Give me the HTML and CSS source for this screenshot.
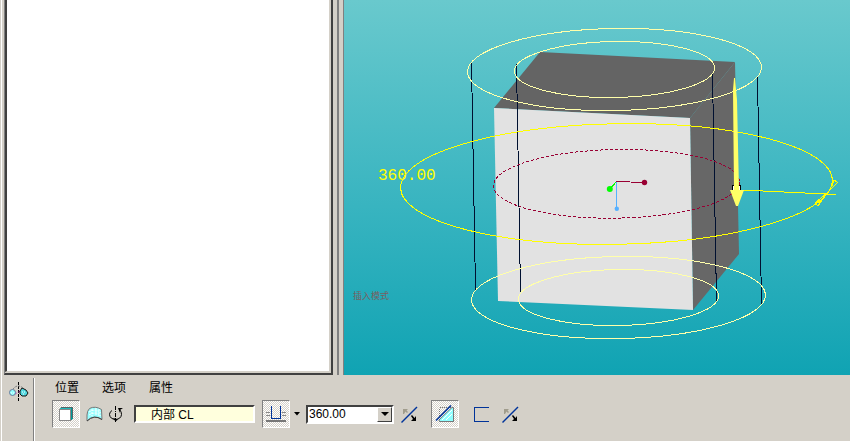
FILE: index.html
```
<!DOCTYPE html>
<html lang="zh-CN">
<head>
  <meta charset="UTF-8">
  <meta name="viewport" content="width=device-width, initial-scale=1.0">
  <title>旋转</title>
  <link rel="stylesheet" href="styles.css">
</head>
<body>
  <div class="app">
    <main class="workspace">
      <aside class="tree-panel">
        <div class="tree-content"></div>
      </aside>
      <div class="splitter"></div>

      <section class="viewport">
        <svg class="scene" viewBox="344 0 506 375">
          <!-- Solid block -->
          <polygon fill="#646464" points="540,52 735,62 690,118 494,108"/>
          <polygon fill="#676767" points="690,118 735,62 739,254 693,310"/>
          <polygon fill="#e2e2e2" points="494,108 690,118 693,310 498,301"/>

          <!-- Revolve preview -->
          <g class="wire edge">
            <path d="M471.5 63L475.5 290M516.5 64L520.5 292M712.5 74L716.5 301M757.5 77L761.5 304"/>
          </g>
          <g class="wire ring">
            <ellipse cx="614.5" cy="69.5" rx="147" ry="41" transform="rotate(-1 614.5 69.5)"/>
            <ellipse cx="614.5" cy="69.5" rx="100" ry="28" transform="rotate(-1 614.5 69.5)"/>
            <ellipse cx="618.5" cy="297.5" rx="147" ry="41" transform="rotate(-1 618.5 297.5)"/>
            <ellipse cx="618.5" cy="297.5" rx="100" ry="28" transform="rotate(-1 618.5 297.5)"/>
          </g>
          <ellipse class="wire path" cx="616.5" cy="183.8" rx="123" ry="34.300" transform="rotate(-1 616.5 183.8)"/>
          <ellipse class="wire angle" cx="616.5" cy="184" rx="216" ry="60.300" transform="rotate(-1 616.5 184)"/>
          <path class="wire angle" d="M742 190L836 194.5M834 180L837.5 182.5L827 193L818 206L815 203L827 193M815 203L820 202M834 180L832 186"/>

          <!-- Direction handle -->
          <rect x="732.5" y="185.5" width="8" height="6" fill="#fff" stroke="#000"/>
          <path fill="#ffff66" d="M734 78H735L737 100L739 190H744L738 206H736L730 190H734L733 90Z"/>

          <!-- Datum axes -->
          <g class="wire">
            <path stroke="#00ff00" d="M616.5 181.5L610 189"/>
            <path stroke="#55b0ff" d="M616.5 181.5V208"/>
            <path stroke="#990033" d="M616.5 181.5L644 182.5"/>
          </g>
          <circle cx="609.8" cy="189" r="3" fill="#00ff00"/>
          <circle cx="616.8" cy="208.8" r="2.2" fill="#55b0ff"/>
          <circle cx="644.5" cy="182.5" r="2.7" fill="#990033"/>

          <text class="angle-label" x="378" y="180">360.00</text>
          <text class="mode-label" x="353" y="299">插入模式</text>
        </svg>
      </section>
    </main>

    <footer class="dashboard">
      <div class="feature-cell">
        <svg width="20" height="20" viewBox="0 0 20 20">
          <path d="M9.5 0V20" stroke="#000" stroke-dasharray="3 1" fill="none" shape-rendering="crispEdges"/>
          <path d="M4 7Q9 1 15 7" stroke="#777" stroke-dasharray="2 1" fill="none"/>
          <path d="M6 12L13 8" stroke="#c030c0" stroke-dasharray="2 2"/>
          <path d="M11 9L13 6L17 8L19 11L17 14H13L11 12Z" fill="#50d8e0" stroke="#111"/>
          <circle cx="3.5" cy="10.500" r="3" fill="#90ffff" stroke="#667799"/>
          <path d="M13 10H17M14 12H16M2 11H5" stroke="#fff" stroke-dasharray="1 1"/>
        </svg>
      </div>

      <div class="dashboard-body">
        <nav class="tabs">
          <button class="tab">位置</button>
          <button class="tab">选项</button>
          <button class="tab">属性</button>
        </nav>

        <div class="toolbar">
          <button class="tool pressed" aria-label="实体">
            <svg width="16" height="16" viewBox="0 0 16 16" shape-rendering="crispEdges">
              <path d="M12 3L15 1V12L12 15Z" fill="#009999"/>
              <path d="M1 3L4 1H15L12 3Z" fill="#20b8b8"/>
              <path d="M1.500 3.500H12.500V14.500H1.500Z" fill="#fff" stroke="#888"/>
              <path d="M3 1.500H14.500V12" fill="none" stroke="#566"/>
            </svg>
          </button>
          <button class="tool flat surface" aria-label="曲面">
            <svg width="17" height="16" viewBox="0 0 17 16">
              <path d="M3.500 2.500Q9 -0.500 15.500 3.500L16 13.500Q8 8 1 15V9Q1 5 3.500 2.500Z" fill="#98ffff" stroke="#777"/>
              <path d="M3 6Q9 2 15 7M3 9Q9 5 15 10M6 3V10M10 2V9M13 3V10" fill="none" stroke="#fff" stroke-dasharray="2 1"/>
              <path d="M1 15Q8 8 16 13.500" fill="none" stroke="#444"/>
            </svg>
          </button>
          <button class="tool flat revolve" aria-label="旋转轴">
            <svg width="16" height="16" viewBox="0 0 16 16">
              <path d="M6.500 0V16" stroke="#000" stroke-dasharray="4 1 1 1" shape-rendering="crispEdges"/>
              <path d="M3 4.500Q0.500 6 0.500 8.500Q1 13 6.500 13.500Q12 13 12.500 8.500Q12.500 6 11 4" fill="none" stroke="#000"/>
              <path d="M9 2H14L11 4V7Z"/>
              <path d="M4 12L6.500 15.500L9 13.500Z"/>
            </svg>
          </button>
          <input class="axis-field" type="text" value="内部 CL" aria-label="旋转轴收集器">

          <button class="tool pressed" aria-label="深度">
            <svg width="20" height="16" viewBox="0 0 20 16" shape-rendering="crispEdges">
              <path d="M0 6.500H4M0 9.500H4M16 6.500H20M16 9.500H20" stroke="#888"/>
              <path d="M0 15H20" stroke="#777" stroke-width="2"/>
              <path d="M5.500 0V12.500H14.500V0" fill="none" stroke="#003399"/>
            </svg>
          </button>
          <button class="tool flat more" aria-label="更多深度选项">
            <svg width="6" height="4" viewBox="0 0 6 4"><path d="M0 0H6L3 3.500Z"/></svg>
          </button>
          <span class="combo">
            <select class="angle-select" aria-label="角度">
              <option>360.00</option>
            </select>
            <span class="combo-arrow">
              <svg width="8" height="4" viewBox="0 0 8 4"><path d="M0 0H8L4 4Z"/></svg>
            </span>
          </span>
          <button class="tool flat flip" aria-label="反向角度">
            <svg width="17" height="17" viewBox="0 0 17 17">
              <path d="M0.500 16.500L16 1" stroke="#003399" stroke-width="1.400"/>
              <path d="M2 3H7L5.500 4.500L7 6L6 7L4.500 5.500L3 8H2Z" fill="#a09c8c"/>
              <path d="M10 10L11 9L13.500 12L15 10V15H10L12 13Z"/>
            </svg>
          </button>

          <button class="tool pressed remove" aria-label="移除材料">
            <svg width="20" height="18" viewBox="0 0 20 18">
              <path d="M4.500 2.500H18.500V16.500H4.500Z" fill="none" stroke="#777" stroke-dasharray="1 1" shape-rendering="crispEdges"/>
              <path d="M4 15L17 2.500H18.500V16.500H4.500Z" fill="#90ffff" stroke="#777"/>
              <path d="M7 15L17 5M11 15L17 9" stroke="#fff"/>
              <path d="M1 15.500L16 0.500" stroke="#003399" stroke-width="1.600"/>
            </svg>
          </button>
          <button class="tool flat thicken" aria-label="加厚草绘">
            <svg width="16" height="16" viewBox="0 0 16 16" shape-rendering="crispEdges">
              <path d="M16 1.500H1.500V15.500H16" fill="none" stroke="#003399"/>
            </svg>
          </button>
          <button class="tool flat flip-side" aria-label="反向材料侧">
            <svg width="17" height="17" viewBox="0 0 17 17">
              <path d="M0.500 16.500L16 1" stroke="#003399" stroke-width="1.400"/>
              <path d="M2 3H7L5.500 4.500L7 6L6 7L4.500 5.500L3 8H2Z" fill="#a09c8c"/>
              <path d="M10 10L11 9L13.500 12L15 10V15H10L12 13Z"/>
            </svg>
          </button>
        </div>
      </div>
    </footer>
  </div>
</body>
</html>
```
FILE: styles.css
```
* {
  box-sizing: border-box;
  margin: 0;
  padding: 0;
}

body {
  background: #d4d0c8;
  color: #000;
  font-family: "Liberation Sans", "Noto Sans CJK SC", sans-serif;
  font-size: 12px;
}

svg {
  display: block;
}

.app {
  min-height: 100vh;
  margin-left: 1px;
  border-left: 1px solid #fff;
}

.workspace {
  display: flex;
}

/* Model tree */
.tree-panel {
  display: flex;
  flex: 0 0 329px;
  margin-left: 2px;
  border: solid #404040;
  border-width: 0 2px 2px 1px;
  border-left-color: #808080;
}

.tree-content {
  flex: 1;
  margin: 0 1px 1px 0;
  background: #fff;
  border: solid #d4d0c8;
  border-width: 0 1px 1px;
  border-left: 2px solid #404040;
}

.splitter {
  flex: 0 0 2px;
  margin: 0 4px;
  background: #808080;
}

/* Graphics area */
.viewport {
  flex: 1;
  min-width: 0;
  border-left: 1px solid #808080;
  background: linear-gradient(#69c9cd, #38b4c0 55%, #10a3b3);
}

.scene {
  width: 100%;
  height: auto;
}

.wire {
  fill: none;
  stroke-width: 1;
  shape-rendering: crispEdges;
}

.edge {
  stroke: #001030;
}

.ring {
  stroke: #ffffaa;
}

.path {
  stroke: #990033;
  stroke-dasharray: 3 2;
}

.angle {
  stroke: #ffff00;
}

.angle-label {
  fill: #ffff00;
  font-family: "Liberation Mono", monospace;
  font-size: 16px;
}

.mode-label {
  fill: #7a5e62;
  font-family: "Noto Sans CJK SC", sans-serif;
  font-size: 9px;
}

/* Dashboard */
.dashboard {
  display: flex;
}

.feature-cell {
  width: 32px;
  margin-top: 3px;
  padding: 4px 0 0 7px;
  border-right: 1px solid #808080;
  box-shadow: 1px 0 #fff;
}

.dashboard-body {
  flex: 1;
  padding: 5px 0 13px 18px;
}

.tabs {
  display: flex;
  gap: 23px;
  padding-left: 3px;
}

.tab {
  background: none;
  border: none;
  font: inherit;
  line-height: 16px;
}

.toolbar {
  display: flex;
  align-items: center;
  margin-top: 4px;
}

.tool {
  display: flex;
  align-items: center;
  justify-content: center;
  flex: none;
  background: none;
  border: none;
}

.pressed {
  width: 28px;
  height: 28px;
  border: 1px solid #808080;
  border-right-color: #fff;
  border-bottom-color: #fff;
  background: repeating-conic-gradient(#d4d0c8 0 25%, #fff 0 50%) 0 0 / 2px 2px;
}

.surface {
  margin-left: 6px;
}

.revolve {
  margin-left: 6px;
}

.axis-field {
  width: 121px;
  height: 18px;
  margin: 0 7px 0 9px;
  padding: 0 0 2px 15px;
  border: 2px solid #404040;
  border-right-color: #fff;
  border-bottom-color: #fff;
  background: #ffffdd;
  font: inherit;
}

.more {
  margin: 0 6px 0 4px;
}

.combo {
  position: relative;
  width: 88px;
  height: 19px;
  border: 2px solid #404040;
  border-right-color: #fff;
  border-bottom-color: #fff;
}

.angle-select {
  display: block;
  width: 100%;
  height: 100%;
  padding-left: 1px;
  border: none;
  border-radius: 0;
  background: #fff;
  color: #000;
  font: inherit;
  appearance: none;
}

.combo-arrow {
  position: absolute;
  top: 0;
  right: 0;
  bottom: 0;
  display: flex;
  align-items: center;
  justify-content: center;
  width: 15px;
  border: 1px solid #fff;
  border-right-color: #404040;
  border-bottom-color: #404040;
  background: #d4d0c8;
  pointer-events: none;
}

.flip {
  margin-left: 7px;
}

.remove {
  margin-left: 13px;
}

.thicken {
  margin-left: 14px;
}

.flip-side {
  margin-left: 13px;
}
```
